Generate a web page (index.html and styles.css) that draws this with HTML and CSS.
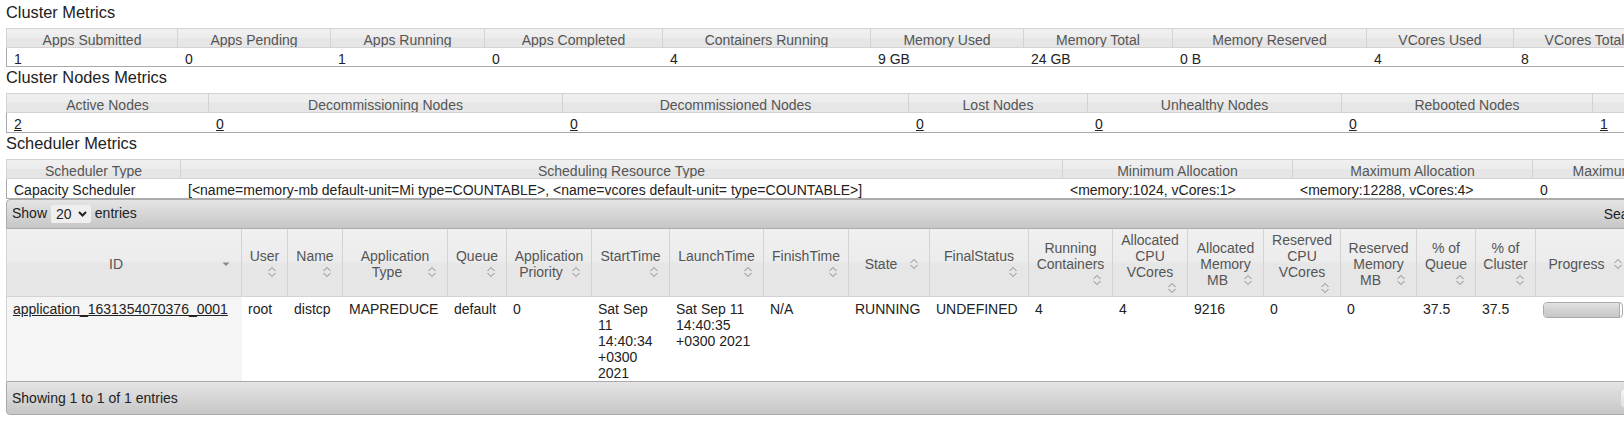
FILE: index.html
```html
<!DOCTYPE html>
<html>
<head>
<meta charset="utf-8">
<title>All Applications</title>
<link rel="stylesheet" href="styles.css">
</head>
<body>
<div class="page">
  <h3 class="title">Cluster Metrics</h3>
  <table class="info t-cluster">
    <colgroup>
      <col style="width:172px"><col style="width:153px"><col style="width:154px"><col style="width:178px"><col style="width:208px"><col style="width:153px"><col style="width:149px"><col style="width:194px"><col style="width:147px"><col style="width:142px"><col style="width:160px">
    </colgroup>
    <thead>
      <tr>
        <th>Apps Submitted</th><th>Apps Pending</th><th>Apps Running</th><th>Apps Completed</th><th>Containers Running</th><th>Memory Used</th><th>Memory Total</th><th>Memory Reserved</th><th>VCores Used</th><th>VCores Total</th><th>VCores Reserved</th>
      </tr>
    </thead>
    <tbody>
      <tr class="short">
        <td>1</td><td>0</td><td>1</td><td>0</td><td>4</td><td>9 GB</td><td>24 GB</td><td>0 B</td><td>4</td><td>8</td><td>0</td>
      </tr>
    </tbody>
  </table>

  <h3 class="title">Cluster Nodes Metrics</h3>
  <table class="info t-nodes">
    <colgroup>
      <col style="width:203px"><col style="width:354px"><col style="width:346px"><col style="width:179px"><col style="width:254px"><col style="width:251px"><col style="width:250px">
    </colgroup>
    <thead>
      <tr>
        <th>Active Nodes</th><th>Decommissioning Nodes</th><th>Decommissioned Nodes</th><th>Lost Nodes</th><th>Unhealthy Nodes</th><th>Rebooted Nodes</th><th>Shutdown Nodes</th>
      </tr>
    </thead>
    <tbody>
      <tr>
        <td><a href="#">2</a></td><td><a href="#">0</a></td><td><a href="#">0</a></td><td><a href="#">0</a></td><td><a href="#">0</a></td><td><a href="#">0</a></td><td><a href="#">1</a></td>
      </tr>
    </tbody>
  </table>

  <h3 class="title">Scheduler Metrics</h3>
  <table class="info t-sched">
    <colgroup>
      <col style="width:175px"><col style="width:882px"><col style="width:230px"><col style="width:240px"><col style="width:308px"><col style="width:200px">
    </colgroup>
    <thead>
      <tr>
        <th>Scheduler Type</th><th>Scheduling Resource Type</th><th>Minimum Allocation</th><th>Maximum Allocation</th><th>Maximum Cluster Application Priority</th><th>Scheduler Busy %</th>
      </tr>
    </thead>
    <tbody>
      <tr>
        <td>Capacity Scheduler</td><td>[&lt;name=memory-mb default-unit=Mi type=COUNTABLE&gt;, &lt;name=vcores default-unit= type=COUNTABLE&gt;]</td><td>&lt;memory:1024, vCores:1&gt;</td><td>&lt;memory:12288, vCores:4&gt;</td><td>0</td><td>-1</td>
      </tr>
    </tbody>
  </table>

  <div class="dt-wrapper">
    <div class="toolbar toolbar-top">
      <div class="length">Show <span class="select">20<svg class="sel-chev" width="9" height="6" viewBox="0 0 9 6"><path d="M1 1 4.5 4.5 8 1" fill="none" stroke="#222" stroke-width="2"/></svg></span> entries</div>
      <div class="filter">Search: <span class="search-input"></span></div>
    </div>
    <table class="apps">
      <colgroup>
        <col style="width:236px"><col style="width:46px"><col style="width:55px"><col style="width:105px"><col style="width:59px"><col style="width:85px"><col style="width:78px"><col style="width:94px"><col style="width:85px"><col style="width:81px"><col style="width:99px"><col style="width:84px"><col style="width:75px"><col style="width:76px"><col style="width:77px"><col style="width:76px"><col style="width:59px"><col style="width:60px"><col style="width:98px"><col style="width:100px"><col style="width:100px">
      </colgroup>
      <thead>
        <tr>
          <th><div class="sw">ID<span class="sort-icon"><svg width="16" height="16" viewBox="0 0 16 16"><path d="M4.5 6.5H11.5L8 10Z" fill="#888"/></svg></span></div></th>
          <th><div class="sw">User<span class="sort-icon ns"></span></div></th>
          <th><div class="sw">Name<span class="sort-icon ns"></span></div></th>
          <th><div class="sw">Application Type<span class="sort-icon ns"></span></div></th>
          <th><div class="sw">Queue<span class="sort-icon ns"></span></div></th>
          <th><div class="sw">Application Priority<span class="sort-icon ns"></span></div></th>
          <th><div class="sw">StartTime<span class="sort-icon ns"></span></div></th>
          <th><div class="sw">LaunchTime<span class="sort-icon ns"></span></div></th>
          <th><div class="sw">FinishTime<span class="sort-icon ns"></span></div></th>
          <th><div class="sw">State<span class="sort-icon ns"></span></div></th>
          <th><div class="sw">FinalStatus<span class="sort-icon ns"></span></div></th>
          <th><div class="sw">Running Containers<span class="sort-icon ns"></span></div></th>
          <th><div class="sw">Allocated CPU VCores<span class="sort-icon ns"></span></div></th>
          <th><div class="sw">Allocated Memory MB<span class="sort-icon ns"></span></div></th>
          <th><div class="sw">Reserved CPU VCores<span class="sort-icon ns"></span></div></th>
          <th><div class="sw">Reserved Memory MB<span class="sort-icon ns"></span></div></th>
          <th><div class="sw">% of Queue<span class="sort-icon ns"></span></div></th>
          <th><div class="sw">% of Cluster<span class="sort-icon ns"></span></div></th>
          <th><div class="sw">Progress<span class="sort-icon ns"></span></div></th>
          <th><div class="sw">Tracking UI<span class="sort-icon ns"></span></div></th>
          <th><div class="sw">Blacklisted Nodes<span class="sort-icon ns"></span></div></th>
        </tr>
      </thead>
      <tbody>
        <tr>
          <td class="sorted"><a href="#">application_1631354070376_0001</a></td>
          <td>root</td>
          <td>distcp</td>
          <td>MAPREDUCE</td>
          <td>default</td>
          <td>0</td>
          <td>Sat Sep 11 14:40:34 +0300 2021</td>
          <td>Sat Sep 11 14:40:35 +0300 2021</td>
          <td>N/A</td>
          <td>RUNNING</td>
          <td>UNDEFINED</td>
          <td>4</td>
          <td>4</td>
          <td>9216</td>
          <td>0</td>
          <td>0</td>
          <td>37.5</td>
          <td>37.5</td>
          <td><div class="progressbar"><div class="progress-value" style="width:97%"></div></div></td>
          <td><a href="#">ApplicationMaster</a></td>
          <td>0</td>
        </tr>
      </tbody>
    </table>
    <div class="toolbar toolbar-bottom">
      <div class="info-text">Showing 1 to 1 of 1 entries</div>
      <div class="paginate">
        <span class="pbtn first">First</span><span class="pbtn">Previous</span><span class="pbtn active">1</span><span class="pbtn">Next</span><span class="pbtn last">Last</span>
      </div>
    </div>
  </div>
</div>
</body>
</html>
```
FILE: styles.css
```css
html, body {
  margin: 0;
  padding: 0;
  background: #ffffff;
  overflow: hidden;
}

body {
  font-family: "Liberation Sans", Arial, sans-serif;
  font-size: 14px;
  color: #222222;
}

.page {
  width: 2100px;
  padding: 2px 0 0 6px;
}

.title {
  margin: 0 0 6px;
  font-size: 16.38px;
  line-height: 20px;
  font-weight: normal;
  color: #222222;
}

a {
  color: #222222;
  text-decoration: underline;
}

/* metric tables */
.info {
  border-collapse: separate;
  border-spacing: 0;
  table-layout: fixed;
}

.t-cluster { width: 1810px; }
.t-nodes { width: 1837px; }
.t-sched { width: 2035px; }

.info th {
  font-weight: normal;
  color: #555555;
  line-height: 14px;
  padding: 4px 7px 0;
  text-align: center;
  white-space: nowrap;
  overflow: hidden;
  border-top: 1px solid #d3d3d3;
  border-right: 1px solid #d3d3d3;
  border-bottom: 1px solid #d3d3d3;
  background: linear-gradient(to bottom, #f0f0f0 0%, #ececec 48%, #e6e6e6 52%, #e6e6e6 100%);
}

.info th:first-child {
  border-left: 1px solid #d3d3d3;
}

.info td {
  line-height: 15px;
  padding: 4px 7px 0;
  text-align: left;
  white-space: nowrap;
  overflow: hidden;
  border-bottom: 1px solid #aaaaaa;
  background: #ffffff;
}

.info tr.short td {
  line-height: 14px;
}

.info td:first-child {
  border-left: 1px solid #aaaaaa;
}

/* datatable */
.dt-wrapper {
  width: 1828px;
}

.toolbar {
  display: flex;
  align-items: center;
  justify-content: space-between;
  border: 1px solid #aaaaaa;
  background: linear-gradient(to bottom, #e4e4e4 0%, #d6d6d6 50%, #c6c6c6 100%);
  color: #222222;
  padding: 0 5px;
}

.toolbar-top {
  height: 28px;
  border-radius: 4px 4px 0 0;
}

.toolbar-bottom {
  height: 32px;
  border-radius: 0 0 4px 4px;
}

.length {
  white-space: nowrap;
}

.select {
  display: inline-flex;
  align-items: center;
  vertical-align: middle;
  box-sizing: border-box;
  height: 18px;
  width: 40px;
  padding-left: 5px;
  margin-top: -2px;
  background: #efefef;
  border-radius: 2px;
  line-height: 18px;
}

.sel-chev {
  margin-left: 6px;
}

.filter {
  white-space: nowrap;
  display: flex;
  align-items: center;
}

.search-input {
  display: inline-block;
  width: 170px;
  height: 18px;
  margin-left: 4px;
  background: #ffffff;
  border: 1px solid #aaaaaa;
}

.apps {
  border-collapse: separate;
  border-spacing: 0;
  table-layout: fixed;
  width: 1828px;
}

.apps th {
  font-weight: normal;
  color: #555555;
  line-height: 16px;
  padding: 3px 7px 0;
  vertical-align: middle;
  border-right: 1px solid #d3d3d3;
  border-bottom: 1px solid #d3d3d3;
  background: linear-gradient(to bottom, #f0f0f0 0%, #ececec 48%, #e6e6e6 52%, #e6e6e6 100%);
}

.apps th:first-child {
  border-left: 1px solid #d3d3d3;
}

.sw {
  text-align: center;
}

.sort-icon {
  float: right;
  display: block;
  width: 16px;
  height: 16px;
}

.sort-icon svg {
  display: block;
}

.sort-icon.ns {
  background-image: url("data:image/svg+xml;utf8,<svg xmlns='http://www.w3.org/2000/svg' width='16' height='16' viewBox='0 0 16 16'><path d='M4.5 7 8 3.5 11.5 7M4.5 9 8 12.5 11.5 9' fill='none' stroke='%23888' stroke-width='1'/></svg>");
  background-repeat: no-repeat;
}

.apps td {
  line-height: 16px;
  padding: 4px 6px 0;
  vertical-align: top;
  text-align: left;
  background: #ffffff;
}

.apps td:first-child {
  border-left: 1px solid #d3d3d3;
}

.apps td.sorted {
  background: #f5f5f5;
}

.progressbar {
  width: 78px;
  height: 14px;
  margin-top: 1px;
  margin-left: 1px;
  border: 1px solid #aaaaaa;
  border-radius: 4px;
  background: #ffffff;
  overflow: hidden;
}

.progress-value {
  height: 14px;
  box-sizing: border-box;
  border-right: 1px solid #aaaaaa;
  border-radius: 3px 0 0 3px;
  background: linear-gradient(to bottom, #e2e2e2 0%, #d2d2d2 50%, #c8c8c8 100%);
}

.paginate {
  display: flex;
  width: 208px;
}

.pbtn {
  display: inline-block;
  padding: 1px 7px;
  margin-right: 2px;
  line-height: 16px;
  border: 1px solid #d3d3d3;
  background: linear-gradient(to bottom, #f4f4f4 0%, #ececec 50%, #e6e6e6 51%, #e6e6e6 100%);
  color: #555555;
}

.pbtn.first { border-radius: 4px 0 0 4px; }
.pbtn.last { border-radius: 0 4px 4px 0; }
.pbtn.active { background: #ffffff; color: #212121; }
```
